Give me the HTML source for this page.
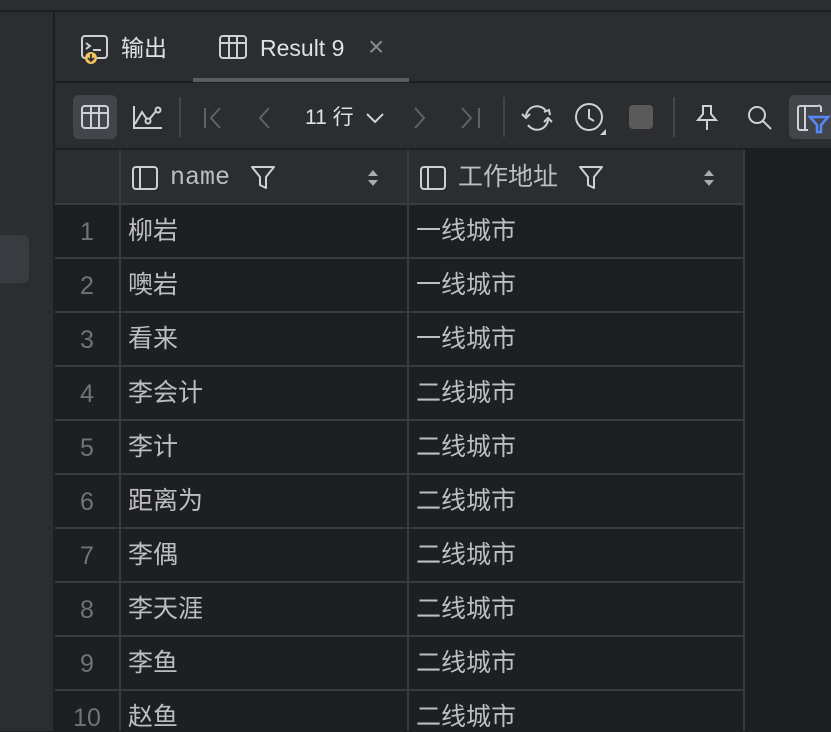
<!DOCTYPE html>
<html><head><meta charset="utf-8"><style>
body{margin:0;width:831px;height:731px;overflow:hidden;background:#1e1f22;font-family:"Liberation Sans","Noto Sans CJK SC",sans-serif;position:relative}
div{line-height:28px}
.a{position:absolute}
.side{left:0;top:12px;width:53px;height:719px;background:#2b2d30;border-right:2px solid #1e1f22}
.top{left:0;top:0;width:831px;height:12px;background:#2b2d30;border-bottom:2px solid #1e1f22;box-sizing:border-box}
.tabs{left:55px;top:12px;width:776px;height:69px;background:#2b2d30;border-bottom:2px solid #1e1f22}
.tb{left:55px;top:83px;width:776px;height:65px;background:#2b2d30;border-bottom:2px solid #1e1f22}
.hdr{left:55px;top:150px;width:688px;height:53px;background:#2b2d30}
.t{color:#dfe1e5;font-size:23px}
.cell{position:absolute;color:#bcbec4;font-size:25px}
.num{position:absolute;color:#6f737a;font-size:25px;width:64px;text-align:center}
.vl{position:absolute;width:2px;background:#393b40}
.hl{position:absolute;height:2px;background:#393b40;left:55px;width:688px}
svg{position:absolute}
</style></head><body>
<div class="a top"></div>
<div class="a side"></div>
<div class="a" style="left:0;top:235px;width:29px;height:48px;background:#393b40;border-radius:0 6px 6px 0"></div>
<div class="a tabs"></div>
<svg style="left:80px;top:34px" width="30" height="32" viewBox="0 0 30 32"><rect x="2" y="2" width="25" height="22" rx="3" fill="none" stroke="#ced0d6" stroke-width="2"/><path d="M6 9l4 3-4 3M13 16h8" stroke="#ced0d6" stroke-width="2" fill="none"/><circle cx="11" cy="24" r="6" fill="#f2c55c"/><path d="M11 20v7M8 24l3 3 3-3" stroke="#2b2d30" stroke-width="1.8" fill="none"/></svg>
<div class="a t" style="left:121px;top:34px">输出</div>
<svg style="left:218px;top:34px" width="30" height="26" viewBox="0 0 30 26"><rect x="2" y="2" width="26" height="22" rx="3" fill="none" stroke="#ced0d6" stroke-width="2"/><path d="M2 9h26M11 2v22M19 2v22" stroke="#ced0d6" stroke-width="2"/></svg>
<div class="a t" style="left:260px;top:34px">Result 9</div>
<div class="a" style="left:368px;top:33px;color:#868a91;font-size:28px">×</div>
<div class="a" style="left:193px;top:78px;width:216px;height:4px;background:#5a5d63"></div>
<div class="a tb"></div>
<div class="a" style="left:73px;top:95px;width:44px;height:44px;background:#43454a;border-radius:6px"></div>
<svg style="left:80px;top:104px" width="30" height="26" viewBox="0 0 30 26"><rect x="2" y="2" width="26" height="22" rx="3" fill="none" stroke="#ced0d6" stroke-width="2"/><path d="M2 9h26M11 2v22M19 2v22" stroke="#ced0d6" stroke-width="2"/></svg>
<svg style="left:132px;top:104px" width="32" height="26" viewBox="0 0 32 26"><path d="M2 2v22h28M3 20l7-12 6 9 8-10" stroke="#ced0d6" stroke-width="2" fill="none"/><circle cx="16" cy="17" r="2.5" fill="#2b2d30" stroke="#ced0d6" stroke-width="2"/><circle cx="26" cy="6" r="2.5" fill="#2b2d30" stroke="#ced0d6" stroke-width="2"/></svg>
<div class="a" style="left:179px;top:97px;width:2px;height:40px;background:#43454a"></div>
<svg style="left:203px;top:106px" width="20" height="24"><path d="M2 2v20M17 2l-9 10 9 10" stroke="#5f6268" stroke-width="2" fill="none"/></svg>
<svg style="left:257px;top:106px" width="16" height="24"><path d="M12 2l-9 10 9 10" stroke="#5f6268" stroke-width="2" fill="none"/></svg>
<div class="a" style="left:305px;top:104px;color:#dfe1e5;font-size:21px">11 行</div>
<svg style="left:365px;top:111px" width="20" height="14"><path d="M2 3l8 8 8-8" stroke="#ced0d6" stroke-width="2" fill="none"/></svg>
<svg style="left:412px;top:106px" width="16" height="24"><path d="M3 2l9 10-9 10" stroke="#5f6268" stroke-width="2" fill="none"/></svg>
<svg style="left:460px;top:106px" width="22" height="24"><path d="M2 2l9 10-9 10M19 2v20" stroke="#5f6268" stroke-width="2" fill="none"/></svg>
<div class="a" style="left:503px;top:97px;width:2px;height:40px;background:#43454a"></div>
<svg style="left:520px;top:102px" width="34" height="32" viewBox="0 0 34 32"><path d="M6 14a11 11 0 0 1 20-5M28 18a11 11 0 0 1-20 5" stroke="#ced0d6" stroke-width="2" fill="none"/><path d="M2 12l4 4 4-4M24 10l5-2 1 5M32 20l-4-4-4 4" stroke="#ced0d6" stroke-width="2" fill="none"/></svg>
<svg style="left:573px;top:101px" width="36" height="36"><circle cx="16" cy="16" r="13" stroke="#ced0d6" stroke-width="2" fill="none"/><path d="M16 8v9l5 3" stroke="#ced0d6" stroke-width="2" fill="none"/><path d="M33 28v6h-6z" fill="#ced0d6"/></svg>
<div class="a" style="left:629px;top:105px;width:24px;height:24px;background:#5a5a5a;border-radius:4px"></div>
<div class="a" style="left:673px;top:97px;width:2px;height:40px;background:#43454a"></div>
<svg style="left:694px;top:104px" width="26" height="28"><path d="M8 2h10M9 2v8l-5 6h18l-5-6V2M13 16v10" stroke="#ced0d6" stroke-width="2" fill="none"/></svg>
<svg style="left:746px;top:104px" width="28" height="28"><circle cx="11" cy="11" r="8" stroke="#ced0d6" stroke-width="2" fill="none"/><path d="M17 17l8 8" stroke="#ced0d6" stroke-width="2"/></svg>
<div class="a" style="left:789px;top:95px;width:42px;height:44px;background:#43454a;border-radius:6px 0 0 6px"></div>
<svg style="left:796px;top:104px" width="35" height="30"><path d="M22 2H4a2 2 0 0 0-2 2v20a2 2 0 0 0 2 2h8M9 2v24M22 2a2 2 0 0 1 3 2v4" stroke="#ced0d6" stroke-width="2" fill="none"/><path d="M14 13h18l-7 8v7h-4v-7z" stroke="#548af7" stroke-width="2.5" fill="none"/></svg>
<div class="a hdr"></div>
<svg style="left:131px;top:165px" width="28" height="26"><rect x="2" y="2" width="24" height="22" rx="3" stroke="#ced0d6" stroke-width="2" fill="none"/><path d="M9 2v22" stroke="#ced0d6" stroke-width="2"/></svg>
<div class="a" style="left:170px;top:164px;color:#bcbec4;font-size:25px;font-family:'Liberation Mono',monospace">name</div>
<svg style="left:250px;top:165px" width="26" height="26"><path d="M2 2h22l-8 10v11l-6-3v-8z" stroke="#ced0d6" stroke-width="2" fill="none" stroke-linejoin="round"/></svg>
<svg style="left:367px;top:169px" width="12" height="18"><path d="M1 7l5-6 5 6zM1 11l5 6 5-6z" fill="#a9abb0"/></svg>
<svg style="left:419px;top:165px" width="28" height="26"><rect x="2" y="2" width="24" height="22" rx="3" stroke="#ced0d6" stroke-width="2" fill="none"/><path d="M9 2v22" stroke="#ced0d6" stroke-width="2"/></svg>
<div class="a" style="left:458px;top:163px;color:#bcbec4;font-size:25px">工作地址</div>
<svg style="left:578px;top:165px" width="26" height="26"><path d="M2 2h22l-8 10v11l-6-3v-8z" stroke="#ced0d6" stroke-width="2" fill="none" stroke-linejoin="round"/></svg>
<svg style="left:703px;top:169px" width="12" height="18"><path d="M1 7l5-6 5 6zM1 11l5 6 5-6z" fill="#a9abb0"/></svg>
<div class="vl" style="left:119px;top:150px;height:581px"></div>
<div class="vl" style="left:407px;top:150px;height:581px"></div>
<div class="vl" style="left:743px;top:150px;height:581px"></div>
<div class="hl" style="top:203px"></div>
<div class="hl" style="top:257px"></div><div class="hl" style="top:311px"></div><div class="hl" style="top:365px"></div><div class="hl" style="top:419px"></div><div class="hl" style="top:473px"></div><div class="hl" style="top:527px"></div><div class="hl" style="top:581px"></div><div class="hl" style="top:635px"></div><div class="hl" style="top:689px"></div>
<div class="num" style="left:55px;top:218px">1</div><div class="cell" style="left:128px;top:217px">柳岩</div><div class="cell" style="left:416px;top:217px">一线城市</div>
<div class="num" style="left:55px;top:272px">2</div><div class="cell" style="left:128px;top:271px">噢岩</div><div class="cell" style="left:416px;top:271px">一线城市</div>
<div class="num" style="left:55px;top:326px">3</div><div class="cell" style="left:128px;top:325px">看来</div><div class="cell" style="left:416px;top:325px">一线城市</div>
<div class="num" style="left:55px;top:380px">4</div><div class="cell" style="left:128px;top:379px">李会计</div><div class="cell" style="left:416px;top:379px">二线城市</div>
<div class="num" style="left:55px;top:434px">5</div><div class="cell" style="left:128px;top:433px">李计</div><div class="cell" style="left:416px;top:433px">二线城市</div>
<div class="num" style="left:55px;top:488px">6</div><div class="cell" style="left:128px;top:487px">距离为</div><div class="cell" style="left:416px;top:487px">二线城市</div>
<div class="num" style="left:55px;top:542px">7</div><div class="cell" style="left:128px;top:541px">李偶</div><div class="cell" style="left:416px;top:541px">二线城市</div>
<div class="num" style="left:55px;top:596px">8</div><div class="cell" style="left:128px;top:595px">李天涯</div><div class="cell" style="left:416px;top:595px">二线城市</div>
<div class="num" style="left:55px;top:650px">9</div><div class="cell" style="left:128px;top:649px">李鱼</div><div class="cell" style="left:416px;top:649px">二线城市</div>
<div class="num" style="left:55px;top:704px">10</div><div class="cell" style="left:128px;top:703px">赵鱼</div><div class="cell" style="left:416px;top:703px">二线城市</div>
</body></html>
